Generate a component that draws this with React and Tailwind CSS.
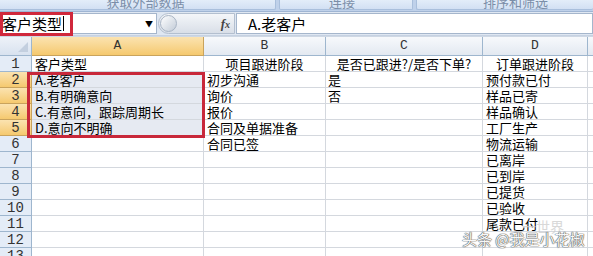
import React from "react";

const colA = ["客户类型", "A.老客户", "B.有明确意向", "C.有意向，跟踪周期长", "D.意向不明确"];
const colB = ["项目跟进阶段", "初步沟通", "询价", "报价", "合同及单据准备", "合同已签"];
const colC = ["是否已跟进?/是否下单?", "是", "否"];
const colD = ["订单跟进阶段", "预付款已付", "样品已寄", "样品确认", "工厂生产", "物流运输", "已离岸", "已到岸", "已提货", "已验收", "尾款已付"];

const cjk = { fontFamily: '"Noto Sans CJK SC", "Noto Sans", sans-serif' };
const mono = { fontFamily: '"Liberation Mono", "DejaVu Sans Mono", monospace' };

function Row({ n }) {
  const i = n - 1;
  const sel = n >= 2 && n <= 5;
  const first = n === 1;
  return (
    <>
      <div
        className={
          "h-[16px] flex items-center justify-center border-r border-b text-[14px] leading-[16px] text-[#333] " +
          (sel
            ? "bg-gradient-to-b from-[#fbe3b0] to-[#f5c96e] border-[#c9a35c]"
            : "bg-[#e4ecf7] border-[#9eb6ce]")
        }
        style={mono}
      >
        {n}
      </div>
      <div
        className={
          "h-[16px] border-r border-b border-[#d4d8de] pl-[3px] text-[13px] leading-[16px] text-black whitespace-nowrap overflow-visible " +
          (sel ? "bg-[#e6eaf2]" : "bg-white")
        }
        style={cjk}
      >
        {colA[i] || ""}
      </div>
      <div
        className={
          "h-[16px] border-r border-b border-[#d4d8de] text-[13px] leading-[16px] text-black whitespace-nowrap bg-white " +
          (first ? "text-center" : "pl-[3px]")
        }
        style={cjk}
      >
        {colB[i] || ""}
      </div>
      <div
        className={
          "h-[16px] border-r border-b border-[#d4d8de] text-[13px] leading-[16px] text-black whitespace-nowrap bg-white " +
          (first ? "text-center" : "pl-[2px]")
        }
        style={cjk}
      >
        {colC[i] || ""}
      </div>
      <div
        className={
          "h-[16px] border-r border-b border-[#d4d8de] text-[13px] leading-[16px] text-black whitespace-nowrap bg-white " +
          (first ? "text-center" : "pl-[3px]")
        }
        style={cjk}
      >
        {colD[i] || ""}
      </div>
      <div className="h-[16px] border-b border-[#d4d8de] bg-white" />
    </>
  );
}

export default function App() {
  const rows = Array.from({ length: 13 }, (_, k) => k + 1);
  return (
    <div className="relative w-[593px] h-[256px] overflow-hidden bg-white" style={cjk}>
      {/* Ribbon strip */}
      <div className="h-[12px] flex gap-[3px] bg-[#bfd1ea] overflow-hidden border-b border-[#9fb5d3]">
        <div className="w-[280px] -ml-[4px] h-[10px] bg-gradient-to-b from-[#e3edf9] to-[#d2e0f3] border-r border-b border-[#a9bfdc] rounded-b-[2px] flex justify-center overflow-hidden">
          <span className="text-[13px] leading-[13px] -mt-[5px] pl-[20px] text-[#7b8ea8]">获取外部数据</span>
        </div>
        <div className="w-[134px] h-[10px] bg-gradient-to-b from-[#e3edf9] to-[#d2e0f3] border-x border-b border-[#a9bfdc] rounded-b-[2px] flex justify-center overflow-hidden">
          <span className="text-[13px] leading-[13px] -mt-[5px] -ml-[8px] text-[#7b8ea8]">连接</span>
        </div>
        <div className="flex-1 h-[10px] bg-gradient-to-b from-[#e3edf9] to-[#d2e0f3] border-l border-b border-[#a9bfdc] rounded-b-[2px] flex overflow-hidden">
          <span className="text-[13px] leading-[13px] -mt-[5px] ml-[66px] text-[#7b8ea8]">排序和筛选</span>
        </div>
      </div>

      {/* Formula bar */}
      <div className="h-[24px] flex items-center bg-[#dfe7f2] border-b border-[#c6d2e2]">
        <div className="h-[21px] w-[157px] bg-white border border-[#a5b6cc] flex items-center">
          <span className="text-[15px] leading-[20px] pl-[1px] text-black">客户类型</span>
          <span className="w-[1px] h-[15px] bg-black ml-[1px]" />
          <span className="ml-auto mr-[3px] text-[8px] text-black">▼</span>
        </div>
        <div className="h-[21px] w-[77px] ml-[1px] rounded-l-full bg-gradient-to-b from-[#f4f6f9] to-[#d9dfe8] border border-[#b3bfcf] flex items-center relative">
          <div className="w-[17px] h-[17px] rounded-full bg-gradient-to-br from-[#ffffff] to-[#c3ccd8] border border-[#a8b4c4] ml-[1px]" />
          <span
            className="ml-auto mr-[4px] text-[13px] italic font-bold text-[#444]"
            style={{ fontFamily: '"Liberation Serif", serif' }}
          >
            f<span className="text-[10px]">x</span>
          </span>
        </div>
        <div className="h-[21px] flex-1 ml-[1px] bg-white border border-[#a5b6cc] flex items-center">
          <span className="pl-[11px] text-[15px] leading-[20px] text-black">A.老客户</span>
        </div>
      </div>
      <div className="h-[1px] bg-[#cfd8e4]" />

      {/* Grid */}
      <div className="grid grid-cols-[32px_172px_122px_157px_105px_1fr]">
        {/* header row */}
        <div className="h-[19px] bg-gradient-to-b from-[#eef2f8] to-[#d8e2ef] border-r border-b border-[#9eb6ce] relative">
          <div className="absolute right-[3px] bottom-[3px] w-0 h-0 border-l-[10px] border-l-transparent border-b-[10px] border-b-[#c3cfdf]" />
        </div>
        <div
          className="h-[19px] flex items-center justify-center bg-gradient-to-b from-[#fbe3b0] to-[#f5c96e] border-r border-b border-[#c9a35c] text-[13px] text-[#333]"
          style={mono}
        >
          A
        </div>
        {["B", "C", "D"].map((c) => (
          <div
            key={c}
            className="h-[19px] flex items-center justify-center bg-gradient-to-b from-[#f7f9fc] to-[#e3e9f1] border-r border-b border-[#9eb6ce] text-[13px] text-[#333]"
            style={mono}
          >
            {c}
          </div>
        ))}
        <div className="h-[19px] bg-gradient-to-b from-[#f7f9fc] to-[#e3e9f1] border-b border-[#9eb6ce]" />
        {rows.map((n) => (
          <Row key={n} n={n} />
        ))}
      </div>

      {/* Red annotation boxes */}
      <div className="absolute left-0 top-[12px] w-[73px] h-[24px] border-[3px] border-[#d0283c] pointer-events-none" />
      <div className="absolute left-[27px] top-[72px] w-[178px] h-[66px] border-[3px] border-[#c8283a] pointer-events-none" />

      {/* Watermark */}
      <div className="absolute left-[522px] top-[216px] text-[14px] text-[#cfcfcf] opacity-80">一世界</div>
      <div
        className="absolute left-[462px] top-[229px] text-[15px] leading-[20px] text-[#f7f7f7] [text-shadow:0_0_1px_#555,0_0_1px_#555,0_0_1px_#555]"
      >
        头条 @我是小花椒
      </div>
    </div>
  );
}
